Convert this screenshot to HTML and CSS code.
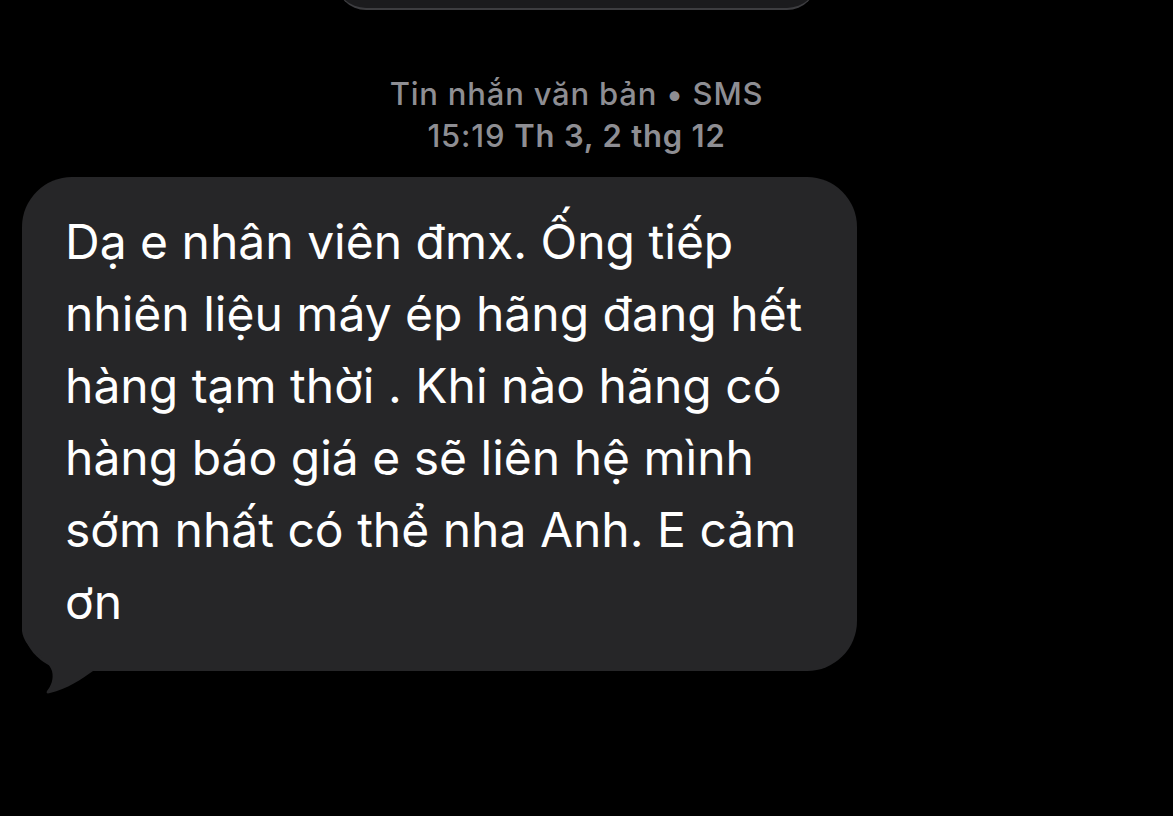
FILE: index.html
```html
<!DOCTYPE html>
<html lang="vi">
<head>
<meta charset="utf-8">
<title>Tin nhắn</title>
<link rel="stylesheet" href="styles.css">
</head>
<body>
<div class="screen">
  <div class="top-bar-wrap"><div class="top-bar"></div></div>
  <div class="meta">
    <div class="meta-line">Tin nhắn văn bản • SMS</div>
    <div class="meta-line">15:19 <span class="date">Th 3, 2 thg 12</span></div>
  </div>
  <div class="thread">
    <div class="bubble">
      <p class="bubble-text">Dạ e nhân viên đmx. Ống tiếp<br>nhiên liệu máy ép hãng đang hết<br>hàng tạm thời . Khi nào hãng có<br>hàng báo giá e sẽ liên hệ mình<br>sớm nhất có thể nha Anh. E cảm<br>ơn</p>
      <svg class="tail" width="100" height="75" viewBox="0 0 100 75">
        <path d="M0 0 L0 10 C1 18 6 25 12 30 C20 36 27 42 30 50 C32 58 29 65 25 70 C24 72 25 73 28 72 C45 68 60 58 71 50 L100 50 L100 0 Z" fill="#262628"/>
      </svg>
    </div>
  </div>
</div>
</body>
</html>
```
FILE: styles.css
```css
html, body {
  margin: 0;
  padding: 0;
  background: #000;
}
.screen {
  width: 1173px;
  height: 816px;
  overflow: hidden;
  background: #000;
  font-family: Inter, "Noto Sans", sans-serif;
  display: flex;
  flex-direction: column;
}
.top-bar-wrap {
  height: 11px;
  position: relative;
  overflow: hidden;
  flex: none;
}
.top-bar {
  margin-left: 336px;
  width: 481px;
  height: 60px;
  margin-top: -50px;
  background: #1b1b1d;
  border-radius: 34px;
  border-bottom: 2px solid #3d3d40;
  box-sizing: border-box;
}
.meta {
  margin-top: 62px;
  padding-right: 20px;
  text-align: center;
  color: #8e8e93;
  font-size: 31px;
  line-height: 42px;
  font-weight: 500;
  letter-spacing: 0.8px;
}
.meta-line .date {
  font-weight: 600;
}
.thread {
  margin-top: 20px;
  padding-left: 22px;
}
.bubble {
  position: relative;
  width: 835px;
  box-sizing: border-box;
  background: #262628;
  border-radius: 50px;
  padding: 29px 20px 33px 43px;
}
.bubble-text {
  margin: 0;
  color: #fff;
  font-size: 48px;
  line-height: 72px;
  font-weight: 400;
  letter-spacing: 0;
}
.tail {
  position: absolute;
  left: 0;
  bottom: -25px;
}
```
